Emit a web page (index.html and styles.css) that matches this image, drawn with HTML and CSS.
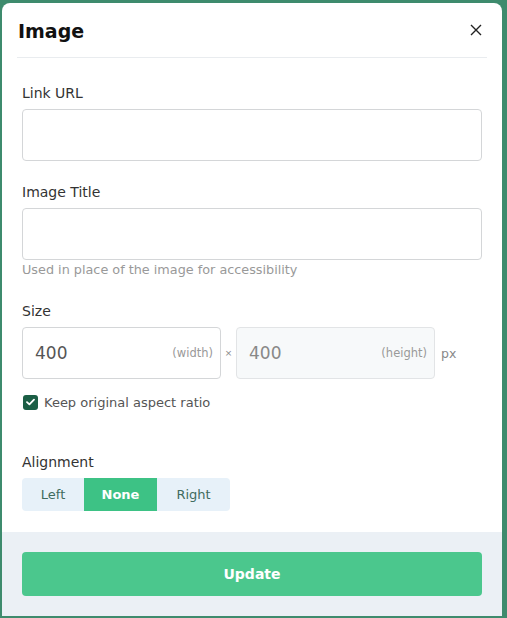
FILE: index.html
```html
<!DOCTYPE html>
<html lang="en">
<head>
  <meta charset="UTF-8">
  <title>Image</title>
  <link rel="stylesheet" href="styles.css">
</head>
<body>
  <div class="modal">
    <div class="modal-header">
      <h2>Image</h2>
      <div class="close">
        <svg width="12" height="12" viewBox="0 0 12 12"><path d="M1 1 L11 11 M11 1 L1 11" stroke="#222" stroke-width="1.4" fill="none"/></svg>
      </div>
    </div>

    <div class="modal-body">
      <label class="label">Link URL</label>
      <div class="input"></div>

      <label class="label gap">Image Title</label>
      <div class="input"></div>
      <p class="help">Used in place of the image for accessibility</p>

      <label class="label gap-size">Size</label>
      <div class="size-row">
        <div class="input size">
          <span class="num">400</span>
          <span class="unit">(width)</span>
        </div>
        <span class="times">×</span>
        <div class="input size disabled">
          <span class="num">400</span>
          <span class="unit">(height)</span>
        </div>
        <span class="px">px</span>
      </div>

      <div class="check-row">
        <span class="checkbox">
          <svg width="9" height="8" viewBox="0 0 9 8"><path d="M1 4.2 L3.4 6.4 L8 1.6" stroke="#fff" stroke-width="1.8" fill="none" stroke-linecap="round" stroke-linejoin="round"/></svg>
        </span>
        Keep original aspect ratio
      </div>

      <label class="label gap-align">Alignment</label>
      <div class="segmented">
        <div class="seg">Left</div>
        <div class="seg active">None</div>
        <div class="seg">Right</div>
      </div>
    </div>

    <div class="modal-footer">
      <button>Update</button>
    </div>
  </div>
</body>
</html>
```

FILE: styles.css
```css
body { margin: 0; padding: 0; background: #3e8b6d; font-family: "DejaVu Sans", sans-serif; }
.modal { width: 500px; margin: 3px 0 0 2px; background: #fff; border-radius: 8px 8px 0 0; overflow: hidden; }
.modal-header { display: flex; justify-content: space-between; align-items: center; height: 54px; margin: 0 15px; border-bottom: 1px solid #e9ecef; }
.modal-header h2 { margin: 2px 0 0 1px; font-size: 19px; font-weight: bold; color: #111; }
.close { display: flex; margin-right: 5px; margin-top: -1px; }
.modal-body { padding: 25px 20px 21px 20px; }
.label { display: block; font-size: 14px; line-height: 20px; color: #333; margin-bottom: 6px; }
.label.gap { margin-top: 21px; }
.label.gap-size { margin-top: 23px; }
.label.gap-align { margin-top: 40px; }
.input { height: 50px; border: 1px solid #d4d6d8; border-radius: 4px; background: #fff; }
.help { margin: 2px 0 0 0; font-size: 12.8px; line-height: 16px; color: #999; }
.size-row { display: flex; align-items: center; }
.input.size { width: 199px; display: flex; align-items: center; justify-content: space-between; padding: 0 7px 0 12px; box-sizing: border-box; height: 52px; }
.input.disabled { background: #f7f9fa; border-color: #e2e4e6; }
.num { font-size: 17px; color: #555; }
.input.disabled .num { color: #888; }
.unit { font-size: 11.5px; color: #999; }
.times { font-size: 9px; color: #888; width: 15px; text-align: center; }
.px { font-size: 12.5px; color: #888; margin-left: 6px; }
.check-row { display: flex; align-items: center; height: 20px; margin-top: 13px; font-size: 13px; color: #555; }
.checkbox { width: 15px; height: 15px; border-radius: 3px; background: #1b5e45; display: flex; align-items: center; justify-content: center; margin: 0 6px 0 1px; }
.segmented { display: flex; width: 208px; height: 33px; border-radius: 4px; overflow: hidden; background: #e7f1f9; }
.seg { display: flex; align-items: center; justify-content: center; font-size: 13px; color: #3f6b5e; }
.seg:nth-child(1) { width: 62px; }
.seg:nth-child(2) { width: 73px; }
.seg:nth-child(3) { width: 73px; }
.seg.active { background: #3dc285; color: #fff; font-weight: bold; }
.modal-footer { background: #ebf0f5; padding: 20px 20px 20px 20px; height: 44px; }
button { width: 100%; height: 44px; border: none; border-radius: 4px; background: #4bc78d; color: #fff; font-family: "DejaVu Sans", sans-serif; font-size: 14px; font-weight: 600; }
```
